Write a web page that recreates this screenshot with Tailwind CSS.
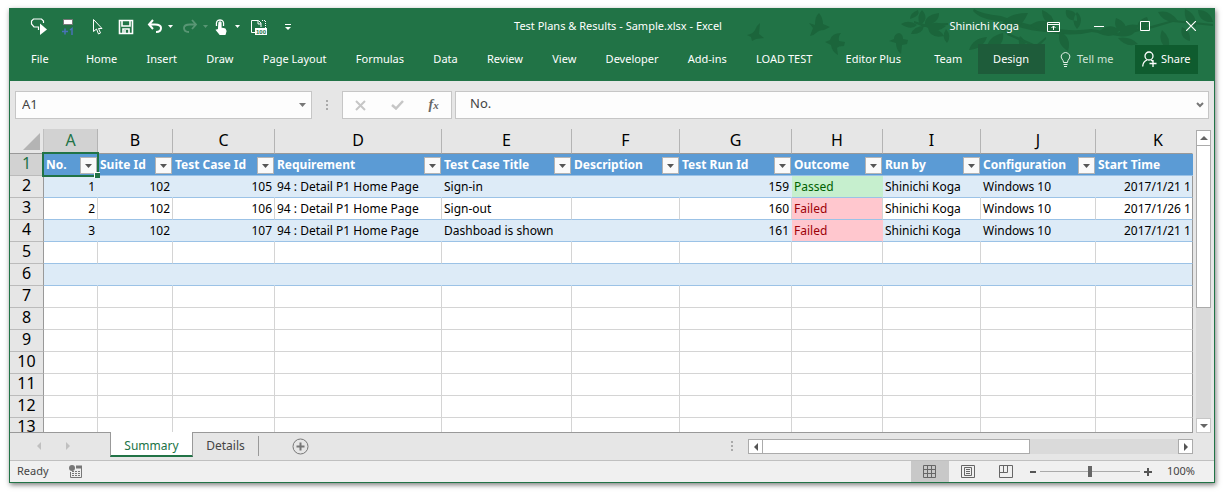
<!DOCTYPE html>
<html lang="en"><head><meta charset="utf-8"><title>Excel</title>
<script src="https://cdn.jsdelivr.net/npm/@tailwindcss/browser@4"></script></head>
<body class="bg-white pt-2 pr-[14px] pb-[11px] pl-[9px] font-['Noto_Sans','Open_Sans',sans-serif] text-xs text-[#444]">
<main class="border border-[#217346] bg-[#e6e6e6] shadow-[1px_2px_5px_0px_rgba(0,0,0,0.5)]">
<header class="relative isolate bg-[#217346] text-white h-[71px] overflow-hidden text-[11px]">
  <svg class="absolute top-0 right-0 -z-10" width="520" height="72" viewBox="694 9 520 72" fill="#1b653b" aria-hidden="true">
    <path d="M747 35q6-1 8-5 2-5 5-7l-1 11 5 4-8 1-4 2-1-4z"/>
    <path d="M809 23l6 2q0-9 4-12 4 5 4 11l7 3-6 3q-5 0-8 3-3 3-6 3l3-8z"/>
    <path d="M825 42q3-1 5-2 2-7 11-7-3 3-2 8l6 1-1 4q-6 0-7 2l1 7q-6-3-7-10z"/>
    <path d="M889 41l5-2q0-5 5-6 4 1 4 6l5 1-1 4-5 1-1 9q-5-4-5-11z"/>
    <path d="M901 24q8-5 16 1-6 6-16-1zM911 34q3-8 13-8-2 9-13 8zM910 19q0-6 8-9 3 6-8 9zM920 25q-4-9 2-15 8 9-2 15zM925 25q-1-10 14-12 0 11-14 12zM926 27q10-8 20-1-9 8-20 1zM928 28q11-1 16 8-14 3-16-8zM946 29q6 7 1 14-6-6-1-14zM914 21l10 3 24-1v2l-24 2-10-4z"/>
    <path d="M974 9l-1 2q8 9 28 10 25 10 45 11 25 5 46 0l26 4 35-8 20-6 40 4v-2l-40-4-22 6-35 7-25-4q-20 3-45-2-20-2-45-11-20-2-27-7z"/>
    <path d="M1028 13q-26 0-27 18 18 3 27-18zM1003 33q2 14-16 18-1-14 16-18zM987 37q-4 12-18 13 4-12 18-13zM1018 55q4-13 24-10-6 11-24 10zM1006 34q-2-8 5-14 6 9-5 14zM1020 36q8 6 5 14-9-5-5-14zM1030 25q14-9 24 1-11 9-24-1z"/>
    <path d="M1008 33q12 5 28 12l10-8v2l-9 9-30-13z"/>
    <path d="M1042 10q12 4 12 15-12-2-12-15zM1060 32q12 5 8 19-12-7-8-19zM1066 10q12 0 11 11-13-1-11-11zM1077 12q-7 9 0 17 8-9 0-17zM1098 33q10-12 22-3-8 10-22 3zM1118 36q4-14 20-11-3 14-20 11zM1116 18q12 4 10 16-14-4-10-16zM1138 30q-3-9 9-13 5 11-9 13zM1118 38q12-2 20 6-12 4-20-6zM1158 12q12-3 20 9-14 3-20-9zM1162 30q10 8 6 19-11-7-6-19zM1182 27q9 4 8 14-11-3-8-14zM1185 9q12 5 11 18-13-4-11-18zM1198 10q12 0 15 12-14 1-15-12z"/>
  </svg>
  <div class="grid grid-cols-[1fr_auto_1fr] items-center h-[34px]">
    <div class="flex items-center pl-[20px]">
      <svg width="270" height="24" viewBox="30 13 270 24" fill="none" stroke="#fff" stroke-width="1.200">
        <path d="M38.500 29v-3H34l-2.500-3v-3l2-2h8l2 2v2"/><path d="M40 22.500l7 6-7 5.500z" fill="#fff" stroke="none"/>
        <path d="M63.500 18.500h9v5h-9z" fill="#fff" stroke="#777" stroke-width="1"/><path d="M62 30.500h6M65 27.500v6M70 29l2-1.500V34" stroke="#4a72b8" stroke-width="1.500"/>
        <path d="M93.500 18.500v12l3-2.500 2 5 2-1-2-4.500h3.500z" stroke-width="1"/>
        <path d="M119.500 19.500h13v13h-13zM122 20v5h8v-5M123 32v-4h6v4M125 29v3" stroke-width="1.600"/>
        <path d="M153 19l-4 4.500 4 4.500M149 23.500h6q6 0 6 3.500 0 4-5 4" stroke-width="2"/><path d="M168 24h5l-2.500 3z" fill="#fff" stroke="none"/>
        <g opacity=".25"><path d="M192 19l4 4.500-4 4.500M196 23.500h-6q-6 0-6 3.500 0 4 5 4" stroke-width="1.800"/><path d="M203 24h5l-2.500 3z" fill="#fff" stroke="none"/></g>
        <path d="M216.500 25q-1-6 3.500-6t3.500 6" stroke-width="1.300"/><path d="M219 21.500q1-1.500 2 0v5.500l4 1 1 2-1 3.500h-5l-3.500-4.500 2-.500z" fill="#fff"/><path d="M235 24h5l-2.500 3z" fill="#fff" stroke="none"/>
        <path d="M255 31.500h-3.500v-12h7l2.500 2.500v4M258 20v3h3" stroke-width="1"/><path d="M262 19.500h3.500V27" stroke-width="1" stroke-dasharray="1 1"/><path d="M255 27h12v7h-12z" fill="#fff" stroke="none"/>
        <text x="256" y="33" font-size="6" font-weight="700" fill="#217346" stroke="none" font-family="Liberation Sans, sans-serif">100</text>
        <path d="M285 23.500h6" stroke-width="1"/><path d="M285 26h6l-3 3z" fill="#fff" stroke="none"/>
      </svg>
    </div>
    <h1 class="pl-3">Test Plans &amp; Results - Sample.xlsx - Excel</h1>
    <div class="flex items-center justify-end">
      <span class="mr-7">Shinichi Koga</span>
      <button aria-label="Ribbon display options" class="mr-[34px]"><svg width="13" height="11" fill="none" stroke="#fff"><path d="M.5 1.500h12v9H.5zM1 3.500h11M6.500 9V5M4.500 7l2-2 2 2"/></svg></button>
      <button aria-label="Minimize" class="mr-[36px]"><svg width="10" height="11" stroke="#fff"><path d="M0 5.500h10"/></svg></button>
      <button aria-label="Maximize" class="mr-[36px]"><svg width="10" height="10" fill="none" stroke="#fff"><path d="M.5.500h9v9h-9z"/></svg></button>
      <button aria-label="Close" class="mr-[18px]"><svg width="10" height="10" stroke="#fff" stroke-width="1.200"><path d="M0 0l10 10M10 0L0 10"/></svg></button>
    </div>
  </div>
  <nav class="flex items-center justify-between pl-[21px] pr-4 pt-px">
    <button class="mr-2">File</button><button>Home</button><button>Insert</button><button>Draw</button><button>Page Layout</button><button>Formulas</button><button>Data</button><button>Review</button><button>View</button><button>Developer</button><button>Add-ins</button><button class="mr-1">LOAD TEST</button><button class="mr-1">Editor Plus</button><button>Team</button>
    <button class="-mx-[14px] h-[30px] w-[67px] bg-[#1e5c3a]">Design</button>
    <button class="flex items-center gap-1.5 text-[#cfe3d6]"><svg width="11" height="15" fill="none" stroke="#e4f0e8"><path d="M3.500 10.500q0-2-1.500-3.500Q.5 5 1.500 3 3 .5 5.500.5T9.500 3q1 2-.5 4-1.500 1.500-1.500 3.500zM3.500 12.500h4M4 14.500h3"/></svg>Tell me</button>
    <button class="-ml-2 flex h-[29px] w-[63px] items-center justify-center gap-1 bg-[#0f5c2f]"><svg width="15" height="16" fill="none" stroke="#fff" stroke-width="1.300"><circle cx="7" cy="5" r="4"/><path d="M.7 15.500Q1 10.500 5 9M9 9l2 1.500M7.500 12.500h7M11 9v7"/></svg>Share</button>
  </nav>
</header>

<section class="flex items-stretch border-t border-[#217346] pl-[5px] pr-[5px] pt-[10px] pb-[10px] h-[49px]" aria-label="Formula bar">
  <div class="flex w-[297px] items-center border border-[#c6c6c6] bg-[#fdfdfd] pr-[5px]"><input aria-label="Name box" value="A1" class="min-w-0 flex-1 px-1.5 text-[13px] outline-none"><svg width="7" height="4" fill="#777"><path d="M0 0h7L3.500 4z"/></svg></div>
  <svg class="mx-[14px] self-center" width="2" height="12" fill="#aaa"><path d="M0 1h2v2H0zM0 5h2v2H0zM0 9h2v2H0z"/></svg>
  <div class="flex w-[110px] items-center justify-around border border-[#c6c6c6] bg-[#fdfdfd]">
    <button aria-label="Cancel"><svg width="11" height="11" stroke="#c6c6c6" stroke-width="2"><path d="M1 1l9 9M10 1l-9 9"/></svg></button>
    <button aria-label="Enter"><svg width="13" height="10" fill="none" stroke="#c6c6c6" stroke-width="2.500"><path d="M1 5l4 3.500L12 1"/></svg></button>
    <button aria-label="Insert function" class="font-['Liberation_Serif',serif] text-sm font-bold italic text-[#666]">f<span class="text-[11px]">x</span></button>
  </div>
  <div class="ml-[3px] flex flex-1 items-center border border-[#c6c6c6] bg-[#fdfdfd] pr-1"><input aria-label="Formula" value="No." class="min-w-0 flex-1 px-[14px] pb-0.5 text-[13px] outline-none"><svg width="8" height="6" fill="none" stroke="#777" stroke-width="2"><path d="M1 1l3 3 3-3"/></svg></div>
</section>

<section class="flex">
  <div class="min-w-0 flex-1 border-b border-[#999]">
  <table class="w-full table-fixed border-separate border-spacing-0 whitespace-nowrap text-black">
    <colgroup><col class="w-[34px]"><col class="w-[54px]"><col class="w-[75px]"><col class="w-[102px]"><col class="w-[167px]"><col class="w-[130px]"><col class="w-[108px]"><col class="w-[112px]"><col class="w-[91px]"><col class="w-[98px]"><col class="w-[115px]"><col></colgroup>
    <thead id="letters"></thead><tbody id="cells"></tbody>
  </table>
  </div>
  <div class="ml-[3px] mr-[3px] mt-px flex w-[15px] flex-col bg-[#dadada]" aria-label="Vertical scroll bar">
    <button aria-label="Scroll up" class="flex h-4 items-center justify-center border border-[#ababab] bg-white"><svg width="8" height="4" fill="#666"><path d="M0 4h8L4 0z"/></svg></button>
    <div class="h-[162px] border border-t-0 border-[#ababab] bg-white"></div>
    <button aria-label="Scroll down" class="mt-auto flex h-[15px] items-center justify-center border border-[#c6c6c6] bg-white"><svg width="8" height="4" fill="#666"><path d="M0 0h8L4 4z"/></svg></button>
  </div>
</section>

<section class="flex h-[28px] items-start border-b border-[#c0c0c0]" aria-label="Sheets">
  <svg class="ml-[27px] mt-[9px]" width="34" height="8" fill="#c0c0c0"><path d="M4 0v8L0 4zM29 0v8l4-4z"/></svg>
  <button class="-mt-px ml-[39px] h-[25px] w-[83px] border-x border-b-2 border-x-[#999] border-b-[#217346] bg-white pt-1 text-[#217346]">Summary</button>
  <button class="mt-[3px] h-[20px] w-[66px] border-r border-[#999]">Details</button>
  <button aria-label="New sheet" class="ml-[33px] mt-[5px]"><svg width="17" height="17" fill="none" stroke="#777"><circle cx="8.500" cy="8.500" r="7.500"/><path d="M4.500 8.500h8M8.500 4.500v8" stroke-width="2"/></svg></button>
  <svg class="ml-auto mt-[8px]" width="2" height="12" fill="#aaa"><path d="M0 0h2v2H0zM0 4h2v2H0zM0 8h2v2H0z"/></svg>
  <div class="ml-[15px] mr-[21px] mt-[6px] flex h-[15px] w-[445px] bg-[#dadada]" aria-label="Horizontal scroll bar">
    <button aria-label="Scroll left" class="flex w-[15px] items-center justify-center border border-[#ababab] bg-white"><svg width="4" height="8" fill="#555"><path d="M4 0v8L0 4z"/></svg></button>
    <div class="w-[267px] border border-l-0 border-[#ababab] bg-white"></div>
    <button aria-label="Scroll right" class="ml-auto flex w-[15px] items-center justify-center border border-[#ababab] bg-white"><svg width="4" height="8" fill="#555"><path d="M0 0v8l4-4z"/></svg></button>
  </div>
</section>

<footer class="flex h-[21px] items-center bg-[#f0f0f0] pl-[7px] text-[11px]">
  <span>Ready</span>
  <svg class="ml-5" width="14" height="13" fill="none" stroke="#777"><circle cx="3" cy="3" r="3" fill="#777" stroke="none"/><path d="M7 2h6" stroke-width="3"/><path d="M1.500 7v5.500h11V2M3 6.500h2m1 0h2m1 0h2M3 8.500h2m1 0h2m1 0h2M3 10.500h2m1 0h2m1 0h2"/></svg>
  <button aria-label="Normal view" class="ml-auto flex h-full w-[38px] items-center justify-center bg-[#c8c8c8]"><svg width="13" height="13" fill="none" stroke="#666"><path d="M.5.500h12v12H.5zM4.500 0v13M8.500 0v13M0 4.500h13M0 8.500h13"/></svg></button>
  <button aria-label="Page layout view" class="flex w-[38px] justify-center"><svg width="14" height="13" fill="none" stroke="#666"><path d="M.5.500h13v12H.5zM3.500 2.500h7v8h-7zM5 4.500h4M5 6.500h4M5 8.500h4"/></svg></button>
  <button aria-label="Page break view" class="flex w-[38px] justify-center"><svg width="14" height="13" fill="none" stroke="#666"><path d="M.5.500h13v12H.5zM.5 7.500h8V.500M4.500 0v7.500"/></svg></button>
  <button aria-label="Zoom out" class="ml-[5px]"><svg width="6" height="8" stroke="#555" stroke-width="2"><path d="M0 4h6"/></svg></button>
  <div class="relative mx-1 flex h-4 w-[100px] items-center"><span class="h-px w-full bg-[#aaa]"></span><span class="absolute left-[48px] h-[11px] w-1 bg-[#666]"></span><input type="range" aria-label="Zoom" class="absolute inset-0 w-full opacity-0"></div>
  <button aria-label="Zoom in"><svg width="8" height="8" stroke="#555" stroke-width="2"><path d="M0 4h8M4 0v8"/></svg></button>
  <span class="ml-[15px] mr-[19px]">100%</span>
</footer>
</main>
<script>
const rows = [
 ['1','102','105','94 : Detail P1 Home Page','Sign-in','','159','Passed','Shinichi Koga','Windows 10','2017/1/21 1'],
 ['2','102','106','94 : Detail P1 Home Page','Sign-out','','160','Failed','Shinichi Koga','Windows 10','2017/1/26 1'],
 ['3','102','107','94 : Detail P1 Home Page','Dashboad is shown','','161','Failed','Shinichi Koga','Windows 10','2017/1/21 1']];
const heads = ['No.','Suite Id','Test Case Id','Requirement','Test Case Title','Description','Test Run Id','Outcome','Run by','Configuration','Start Time'];
const numeric = [0,1,2,6];
let h = '<tr><th class="h-[25px] border-b border-r border-b-[#999] border-r-[#c0c0c0] p-0"><svg class="ml-auto mr-[3px]" width="17" height="17" fill="#b4b4b4"><path d="M17 0v17H0z"/></svg></th>';
[...'ABCDEFGHIJK'].forEach((c,i)=>{h+=`<th scope="col" class="h-[25px] border-b border-r ${i==10?'border-r-transparent':'border-r-[#b4b4b4]'} border-b-[#999] p-0 pb-0.5 text-base leading-5 font-normal ${i?'text-black':'bg-[#d2d2d2] text-[#217346]'} ${i==10?'pl-7':''}">${c}</th>`});
letters.innerHTML = h+'</tr>';
let b='';
for(let r=1;r<=13;r++){
 const ht = r==13?'h-[14px]':'h-[22px]', band=[2,4,6].includes(r), tbl=r<=6;
 b+=`<tr><th scope="row" class="${ht} border-r border-r-[#999] p-0 align-top text-base font-normal leading-none ${r==13?'':'border-b border-b-[#bbb]'} ${r==1?'bg-[#d2d2d2] text-[#217346]':'text-black'}"><div class="${r==13?'h-[14px] leading-4':'h-[21px] leading-[18px]'}">${r}</div></th>`;
 for(let c=0;c<11;c++){
  if(r==1){
   b+=`<td class="${ht} border-b border-[#9bc2e6] bg-[#5b9bd5] p-0 font-bold text-white"><div class="relative flex h-[21px] items-center justify-between pl-0.5">${heads[c]}`+
    (c<10?`<button aria-label="Filter ${heads[c]}" class="absolute right-px top-[3px] flex h-[17px] w-[17px] items-center justify-center border border-[#b4b4b4] bg-[#fafafa]"><svg width="7" height="4" fill="#555"><path d="M0 0h7L3.500 4z"/></svg></button>`:'')+
    (c==0?'<span class="pointer-events-none absolute -top-[2px] -left-[2px] -right-[1px] -bottom-[2px] z-10 border-2 border-[#217346]"></span><span class="absolute -right-[2px] -bottom-[3px] z-20 h-[6px] w-[6px] border-t border-l border-white bg-[#217346]"></span>':'')+'</div></td>';
   continue;
  }
  const t=(rows[r-2]||[])[c]||'';
  let bg = c==7&&r==2?'bg-[#c6efce] text-[#006100]':c==7&&(r==3||r==4)?'bg-[#ffc7ce] text-[#9c0006]':band?'bg-[#ddebf7]':'bg-white';
  const line = (tbl?'border-b-[#9bc2e6]':'border-b-[#d4d4d4]')+' '+(c==10?'border-r-[#999]':band?'border-r-transparent':'border-r-[#d4d4d4]');
  b+=`<td class="${ht} border-r ${r==13?'':'border-b'} ${line} ${bg} px-0.5 py-0 leading-4 ${numeric.includes(c)?'text-right':''} ${c==10?'pl-7':''}">${t}</td>`;
 }
 b+='</tr>';
}
cells.innerHTML=b;
</script>
</body></html>
